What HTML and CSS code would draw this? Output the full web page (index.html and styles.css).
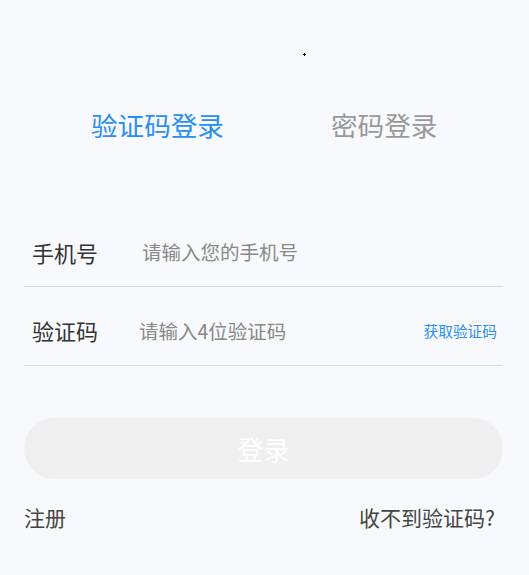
FILE: index.html
```html
<!DOCTYPE html>
<html lang="zh-CN">
<head>
    <meta charset="UTF-8">
    <meta name="viewport" content="width=device-width, initial-scale=1.0">
    <title>验证码登录</title>
    <link rel="stylesheet" href="styles.css">
</head>
<body>
    <div class="top">
        <div class="dot"></div>
    </div>

    <div class="tabs">
        <div class="tab active">验证码登录</div>
        <div class="tab">密码登录</div>
    </div>

    <div class="form">
        <div class="row">
            <span class="label">手机号</span>
            <input type="text" class="field" placeholder="请输入您的手机号">
        </div>
        <div class="row">
            <span class="label">验证码</span>
            <input type="text" class="field" placeholder="请输入4位验证码">
            <span class="get-code">获取验证码</span>
        </div>
    </div>

    <button class="login" disabled>登录</button>

    <div class="footer">
        <span>注册</span>
        <span>收不到验证码?</span>
    </div>
</body>
</html>
```

FILE: styles.css
```css
body {
    margin: 0;
    background-color: #f8f9fd;
    font-family: "Noto Sans CJK SC", "Noto Sans", sans-serif;
    color: #333;
}
.top {
    height: 90px;
    padding-top: 53px;
    box-sizing: border-box;
}
.dot {
    width: 3px;
    height: 3px;
    margin-left: 303px;
    background:
        linear-gradient(#000, #000) center / 3px 1px no-repeat,
        linear-gradient(#000, #000) center / 1px 3px no-repeat;
}
.tabs {
    display: flex;
    gap: 107px;
    padding-left: 91px;
    margin-top: 20px;
}
.tab {
    font-size: 26.6px;
    line-height: 30px;
    color: #999;
}
.tab.active {
    color: #2a8ff0;
}
.form {
    margin: 69px 26px 0 24px;
}
.row {
    display: flex;
    align-items: center;
    height: 78px;
    padding: 8px 6px 0 8px;
    box-sizing: border-box;
    border-bottom: 1px solid #d8d8d8;
}
.row + .row {
    height: 79px;
}
.label {
    width: 110px;
    font-size: 22px;
    color: #333;
}
.row + .row .label {
    width: 107px;
}
.field {
    flex: 1;
    min-width: 0;
    border: none;
    outline: none;
    background: transparent;
    padding: 0;
    font-family: inherit;
    font-size: 19.5px;
    color: #333;
}
.field::placeholder {
    color: #888;
}
.get-code {
    font-size: 14.7px;
    color: #2a8ff0;
}
.login {
    display: block;
    width: 479px;
    height: 61px;
    margin: 52px 0 0 24px;
    border: none;
    border-radius: 31px;
    background-color: #efefef;
    color: #fff;
    font-family: inherit;
    font-size: 26px;
}
.footer {
    display: flex;
    justify-content: space-between;
    margin: 24px 34px 0 24px;
    font-size: 21px;
    line-height: 28px;
    color: #444;
}
```
